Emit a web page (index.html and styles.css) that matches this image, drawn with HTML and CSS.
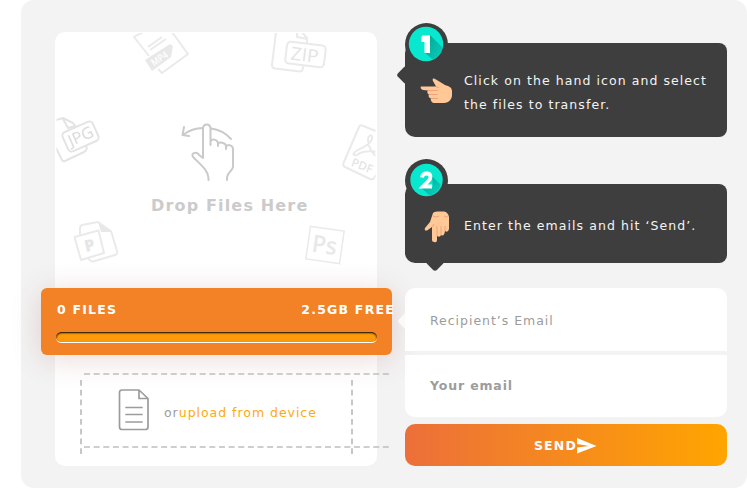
FILE: index.html
```
<!DOCTYPE html>
<html lang="en">
<head>
<meta charset="utf-8">
<title>Send files</title>
<link rel="stylesheet" href="styles.css">
</head>
<body>
<main class="panel">
  <section class="card">
    <div class="drop">
      <svg class="art" width="322" height="256" viewBox="55 32 322 256" fill="none" stroke-linejoin="round" stroke-linecap="round">
        <defs><clipPath id="edge"><rect x="56.500" y="33" width="319" height="255"/></clipPath></defs>
        <g clip-path="url(#edge)" stroke="#eaeaea" stroke-width="2">
          <g stroke-linecap="butt">
            <path d="M143 32L134 37L149 56M158 69L162 73L188 54L172 32"/>
            <path d="M148 47L162 37M150 50L166 39"/>
            <path d="M145 60L170 44L173 46L171 57L152 71Z" fill="#e8e8e8" stroke="none"/>
          </g>
          <text class="tag" transform="translate(154 66.500) rotate(-34)" font-size="10" fill="#fff" stroke="none" textLength="18" lengthAdjust="spacingAndGlyphs">MP4</text>
          <path d="M276 32L272 65Q272 68 275 68.500L300 71.500Q303 71 303 67M297 33L297 37L307 39L307 43M302 32L307 38"/>
          <rect x="286" y="43.500" width="39" height="22" rx="4" transform="rotate(7 305.500 54.500)"/>
          <text class="tag light" transform="translate(290 59.500) rotate(7)" font-size="18" fill="#e4e4e4" stroke="none" textLength="28" lengthAdjust="spacingAndGlyphs">ZIP</text>
          <g stroke="#e4e4e4">
            <path d="M56 120L63 118L73 123L76 127M63 119L68 128L75 126M56 148L62 160Q63 162 65 161L84 152Q88 150 86 146"/>
            <rect x="64" y="126" width="33" height="21" rx="4" transform="rotate(-24 80.500 136.500)"/>
          </g>
          <text class="tag light" transform="translate(71 146.500) rotate(-24)" font-size="16" fill="#dadada" stroke="none" textLength="26" lengthAdjust="spacingAndGlyphs">JPG</text>
          <path d="M378 132L362 125.500Q360 124.500 359 127L343.500 163Q342.500 166 345 167L370 179Q373 180 374 178L378 172"/>
          <path d="M353.500 154C355 149 370 147 372 139C373 133 368 135 368 140C368 147 373 155 378 157M353.500 154Q355 157 360 153Q367 150 378 152"/>
          <text class="tag" transform="translate(350.500 165.500) rotate(21)" font-size="11.500" fill="#e4e4e4" stroke="none" textLength="22" lengthAdjust="spacingAndGlyphs">PDF</text>
          <g stroke-width="2">
            <path d="M74.500 237L98.500 230.500L104 253L81 260Z"/>
            <path d="M80 234V228Q80 226 82 225L98 222L111 231L117 251Q118 254 115 255L93 261.500Q91 262 89 259"/>
            <path d="M98 222L101 232L111 232Z" fill="#e8e8e8" stroke="none"/>
          </g>
          <text class="tag bold" transform="translate(86 252) rotate(-14)" font-size="16" fill="#e6e6e6" stroke="none">P</text>
          <rect x="308" y="228.500" width="34" height="33" transform="rotate(8 325 245)" stroke-width="1.500" stroke-linejoin="miter"/>
          <text class="tag" transform="translate(311 251.500) rotate(8)" font-size="24" fill="#e8e8e8" stroke="none" textLength="25" lengthAdjust="spacingAndGlyphs">Ps</text>
        </g>
        <g stroke="#cacaca" stroke-width="2">
          <path d="M208.500 180V178C208 170 200 164 194 158C189 153 197 151 199 155L203 158V129C203 123 210.500 123 210.500 129V145V142C211 138 218 139 218 144V146V144C219 141 226 143 226 146V149V147C228 143 233 146 233 149V167C233 170 227 173 227 178V180"/>
          <path d="M203 128Q192 128 183 135M184 127L182.500 135L189 136M211 128.500Q223 130 231 139"/>
        </g>
      </svg>
      <h2 class="drop-title">Drop Files Here</h2>
    </div>
    <div class="quota">
      <div class="quota-row"><span>0 FILES</span><span>2.5GB FREE</span></div>
      <div class="track"></div>
    </div>
    <div class="upload">
      <svg class="dashes" width="310" height="82" viewBox="80 373 310 82" stroke="#bebebe" stroke-width="1.700" fill="none">
        <path d="M84 374H389M84 447H389" stroke-dasharray="6 3.640"/>
        <path d="M81 380V454M352 380V454" stroke-dasharray="5.700 4.050"/>
      </svg>
      <svg class="doc" width="32" height="43" viewBox="118 388 32 43" fill="none" stroke="#9c9c9c" stroke-width="1.700" stroke-linejoin="round" stroke-linecap="round">
        <path d="M139 390H122Q119.500 390 119.500 392.500V427Q119.500 429.500 122 429.500H145.500Q148 429.500 148 427V398.500ZM139 390V398.500H148M126 407.500H142M126 414.500H142M126 422H142"/>
      </svg>
      <p class="upload-text">or<a>upload from device</a></p>
    </div>
  </section>

  <section class="side">
    <div class="step step-one">
      <svg class="badge" width="43" height="43" viewBox="0 0 43 43">
        <defs><linearGradient id="shade" x1="0" y1="0" x2="1" y2="1"><stop offset="0" stop-color="#05a294"/><stop offset="1" stop-color="#08d9c2"/></linearGradient>
        <clipPath id="disc"><circle cx="21" cy="21" r="17.200"/></clipPath></defs>
        <circle cx="21.500" cy="21.500" r="21.500" fill="#3e3e3e"/><circle cx="21" cy="21" r="17.200" fill="#08e8cf"/>
        <path clip-path="url(#disc)" d="M25 12L41 28L35 43L19 29L25 29Z" fill="url(#shade)"/>
        <path d="M17.500 12.500H25V30H19.500V19H16.500V14Z" fill="#fff"/>
      </svg>
      <svg class="hand" width="32" height="26" viewBox="0 0 32 26"><path d="M1 8.500C0 9.500 1 11.500 3 12L8 12.500C7 13 7 16 9 16.500C8 18 9 20 11 20.500C10 22 12 25 14 25H24C29 25 32 21 32 17V13C32 9 28 8 25 7L16 1.500C13 -.5 12 1 13 3L16 8.500H3Z" fill="#ffc896"/><path d="M8 12.500H18M9 16.500H18M11 20.500H18M16 8.500L19 10" stroke="#f0a378" fill="none"/></svg>
      <p>Click on the hand icon and select<br>the files to transfer.</p>
    </div>
    <div class="step step-two">
      <svg class="badge" width="43" height="43" viewBox="0 0 43 43">
        <circle cx="21.500" cy="21.500" r="21.500" fill="#3e3e3e"/><circle cx="21.500" cy="21" r="16.200" fill="#08e8cf"/>
        <path d="M27 17L36 26Q33 34 25 37L16 28.500L28 28Z" fill="url(#shade)"/>
        <path d="M17 18.500Q17.500 14.500 21.500 14.500Q25.500 14.500 25.500 18Q25.500 20 23 22.500L18 27.500H27" stroke="#fff" stroke-width="3.800" fill="none"/>
      </svg>
      <svg class="hand" width="32" height="32" viewBox="0 0 32 32"><path d="M9 2Q10 .5 13 .5H20Q24 1 25 6V18Q24 22 21 20Q20 26 17 24Q16 27 13 25V29Q13 32 10 31Q8 31 8 29V16L3 19.500Q0 20 1 17L6 11Z" fill="#ffc896"/><path d="M13 15V25M17 15V24M21 15V20M8 16L10 13M9 5Q12 7 15 5M20 5Q23 7 24 5" stroke="#f0a378" fill="none"/></svg>
      <p>Enter the emails and hit ‘Send’.</p>
    </div>
    <form class="form">
      <div class="field">Recipient’s Email</div>
      <div class="field strong">Your email</div>
    </form>
    <button class="send" type="button">SEND<svg width="20" height="16" viewBox="0 0 20 16"><path d="M0 0L19.500 8L0 15.500V9.500L12 8L0 6Z" fill="#fff"/></svg></button>
  </section>
</main>
</body>
</html>
```
FILE: styles.css
```
* { box-sizing: border-box; }
body {
  margin: 0;
  background: #fff;
  font: 12.5px/24px "DejaVu Sans", sans-serif;
  letter-spacing: .97px;
  overflow: hidden;
}
p, h2 { margin: 0; }
.panel {
  display: grid;
  grid-template-columns: 322px 322px;
  gap: 28px;
  width: 726px;
  height: 488px;
  margin-left: 21px;
  padding: 32px 20px 22px 34px;
  border-radius: 13px;
  background: #f3f3f3;
}
.card { height: 434px; border-radius: 10px; background: #fff; }
.drop { position: relative; height: 256px; padding-top: 162px; }
.art { position: absolute; top: 0; left: 0; }
.tag { font-family: "Open Sans", sans-serif; letter-spacing: 0; font-weight: 600; }
.tag.light { font-weight: 400; }
.tag.bold { font-weight: 800; }
.drop-title {
  position: relative;
  padding-left: 96px;
  font-size: 16px;
  letter-spacing: 1.16px;
  white-space: nowrap;
  color: #cbcbcb;
}
.quota {
  position: relative;
  height: 67px;
  margin: 0 -15px 0 -14px;
  padding: 10px 15px 0;
  border-radius: 6px;
  background: #f38227;
  box-shadow: 0 4px 30px rgba(140, 30, 30, .17);
  color: #fff;
  font-weight: 700;
}
.quota-row { display: flex; justify-content: space-between; margin-right: -18px; padding-left: 1px; letter-spacing: 1.22px; }
.track {
  height: 11px;
  margin-top: 10px;
  border-radius: 6px;
  background: #ff9b0b;
  box-shadow: inset 0 1px 2px #000;
  border-bottom: 1px solid #fff;
}
.upload {
  position: relative;
  display: flex;
  align-items: center;
  height: 111px;
  padding: 0 0 3px 63px;
}
.dashes { position: absolute; left: 25px; top: 18px; }
.doc { flex: none; }
.upload-text { margin-left: 14px; padding-top: 7px; white-space: nowrap; color: #9c9c9c; }
.upload-text a { color: #ffa90b; }
.side { display: flex; flex-direction: column; padding-top: 11px; }
.step {
  position: relative;
  display: flex;
  align-items: center;
  border-radius: 10px 8px 8px 10px;
  background: #3e3e3e;
  color: #fff;
}
.step p { white-space: nowrap; color: #f4f4f4; letter-spacing: 1.07px; }
.step::before, .form::before {
  content: "";
  position: absolute;
  width: 14px;
  height: 14px;
  border-radius: 3px;
  background: #3e3e3e;
  transform: rotate(45deg);
}
.step-one { height: 94px; padding: 5px 0 0 15px; }
.step-one::before { left: -6px; top: 25px; }
.step-two { height: 79px; margin-top: 47px; padding: 5px 0 0 19px; }
.step-two::before { left: 23px; bottom: -6px; }
.badge { position: absolute; left: 0; top: -20px; }
.step-two .badge { top: -25px; }
.step-one p { margin-left: 12px; }
.step-two p { margin-left: 8px; }
.step-one .hand { margin-top: -4px; }
.step-two .hand { margin-top: 2px; }
.form { position: relative; margin-top: 25px; border-radius: 10px; }
.form::before { left: -5px; top: 26px; background: #fcf9f9; }
.field {
  position: relative;
  height: 63px;
  padding: 21px 25px;
  border-radius: 10px 10px 0 0;
  background: #fff;
  color: #9c9c9c;
}
.field.strong { height: 62px; margin-top: 4px; padding-top: 19px; border-radius: 0 0 10px 10px; font-weight: 700; letter-spacing: .85px; }
.send {
  display: flex;
  align-items: center;
  justify-content: center;
  height: 42px;
  margin-top: 7px;
  padding: 2px 1px 0 0;
  border: 0;
  border-radius: 10px;
  background: linear-gradient(90deg, #ec6f3a, #ffa500);
  color: #fff;
  font: 700 12.5px/24px "DejaVu Sans", sans-serif;
  letter-spacing: 1.2px;
}
```
